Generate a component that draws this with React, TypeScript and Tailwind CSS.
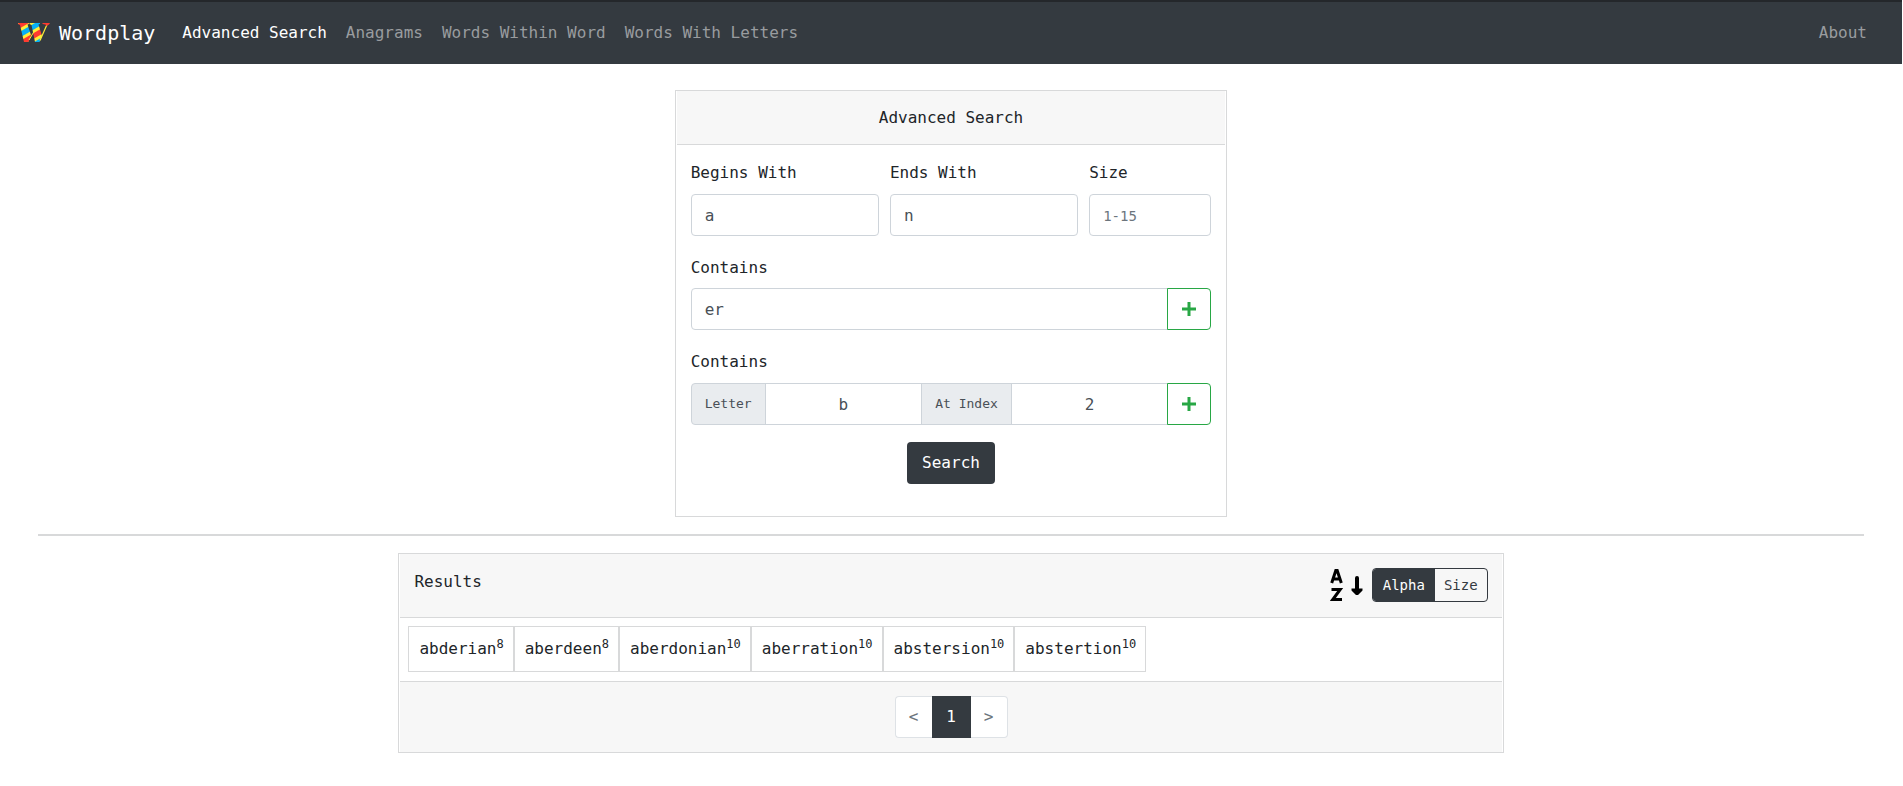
import React from "react";

const navLinks = ["Advanced Search", "Anagrams", "Words Within Word", "Words With Letters"];

const results = ["abderian", "aberdeen", "aberdonian", "aberration", "abstersion", "abstertion"];

const field =
  "h-[42px] w-full min-w-0 border border-[#ced4da] bg-white px-[13px] text-[#495057] outline-none";

function Logo() {
  return (
    <svg width="34" height="20" viewBox="0 0 34 20" aria-hidden="true">
      <defs>
        <pattern id="stripes" width="20" height="16" patternUnits="userSpaceOnUse" patternTransform="rotate(-30)">
          <rect width="20" height="16" fill="#ffee38" />
          <rect y="1" width="20" height="5" fill="#ff3b30" />
          <rect y="9" width="20" height="5" fill="#06b0f5" />
        </pattern>
      </defs>
      <path fill="url(#stripes)" d="M1 0H12V1L10.500 1.500L14 12L11.500 19H7L3 2L1 1Z" />
      <path fill="url(#stripes)" d="M12.500 0H23V1L21.500 1.500L25 13L22.500 19H18L14.500 2L12.500 1Z" />
      <path d="M12 17L17 8.500" fill="none" stroke="#ffee38" strokeWidth="1" />
      <path d="M23 17.500L30 1.500" fill="none" stroke="#ffee38" strokeWidth="1.200" />
      <path d="M25.500 0H33L32 1.500L29.500 3L28.500 1.500L25.500 1Z" fill="#ff3b30" />
    </svg>
  );
}

function SortIcon() {
  return (
    <svg width="34" height="34" viewBox="0 0 34 34" fill="none" stroke="#000" strokeWidth="3" aria-hidden="true">
      <path d="M1.700 15L5.800 2.500H7.200L11.300 15M3.500 11H9.500" />
      <path d="M1.500 21.500H10.200L2.800 31.500H12" />
      <path
        d="M25 10a2 2 0 0 1 4 0V20.500H32.500V22.500L28 27H26L21.500 22.500V20.500H25Z"
        fill="#000"
        stroke="none"
      />
    </svg>
  );
}

function AddButton({ label }: { label: string }) {
  return (
    <button
      type="button"
      aria-label={label}
      className="-ml-px flex h-[42px] w-11 shrink-0 items-center justify-center rounded-r border border-[#28a745] bg-white text-[#28a745]"
    >
      <svg width="14" height="14" viewBox="0 0 14 14" stroke="currentColor" strokeWidth="3" aria-hidden="true">
        <path d="M7 0V14M0 7H14" />
      </svg>
    </button>
  );
}

export default function App() {
  return (
    <div className="bg-white pr-px font-['DejaVu_Sans_Mono',monospace] text-base leading-6 text-[#212529]">
      <nav className="flex h-16 items-center border-t-2 border-[#24272b] bg-[#343a40] pr-[35px] pl-[17px]">
        <a href="#" className="mr-[27px] flex items-center gap-2 text-xl text-white">
          <Logo />
          Wordplay
        </a>
        <ul className="flex gap-[19px]">
          {navLinks.map((link, i) => (
            <li key={link}>
              <a href="#" className={i === 0 ? "text-white" : "text-[#999c9f]"}>
                {link}
              </a>
            </li>
          ))}
        </ul>
        <a href="#" className="ml-auto text-[#999c9f]">
          About
        </a>
      </nav>

      <main className="flex flex-col items-center px-[30px] pt-[26px]">
        <section className="w-[30%] min-w-[480px] border border-[#d8d9da] px-px">
          <h1 className="border-b border-[#d8d9da] bg-[#f7f7f7] pt-[15px] pb-[14px] text-center">
            Advanced Search
          </h1>
          <form className="px-[14px] pt-4 pb-8" onSubmit={(e) => e.preventDefault()}>
            <div className="grid grid-cols-[188fr_188fr_122fr] gap-[11px]">
              <div>
                <label htmlFor="begins" className="mb-[9px] block">Begins With</label>
                <input id="begins" defaultValue="a" className={`${field} rounded`} />
              </div>
              <div>
                <label htmlFor="ends" className="mb-[9px] block">Ends With</label>
                <input id="ends" defaultValue="n" className={`${field} rounded`} />
              </div>
              <div>
                <label htmlFor="size" className="mb-[9px] block">Size</label>
                <input
                  id="size"
                  placeholder="1-15"
                  className={`${field} rounded placeholder:text-sm placeholder:text-[#6c757d]`}
                />
              </div>
            </div>

            <label htmlFor="contains" className="mt-5 mb-2 block">Contains</label>
            <div className="flex">
              <input id="contains" defaultValue="er" className={`${field} flex-1 rounded-l`} />
              <AddButton label="Add contained text" />
            </div>

            <p className="mt-5 mb-[9px]">Contains</p>
            <div className="flex">
              <label
                htmlFor="letter"
                className="flex shrink-0 items-center rounded-l border border-[#ced4da] bg-[#e9ecef] px-[13px] text-[13px] text-[#495057]"
              >
                Letter
              </label>
              <input id="letter" defaultValue="b" className={`${field} -ml-px flex-1 text-center`} />
              <label
                htmlFor="index"
                className="-ml-px flex shrink-0 items-center border border-[#ced4da] bg-[#e9ecef] px-[13px] text-[13px] text-[#495057]"
              >
                At Index
              </label>
              <input id="index" defaultValue="2" className={`${field} -ml-px flex-1 text-center`} />
              <AddButton label="Add letter at index" />
            </div>

            <div className="mt-[17px] flex justify-center">
              <button type="submit" className="h-[42px] rounded bg-[#343a40] px-[15px] text-white">
                Search
              </button>
            </div>
          </form>
        </section>

        <hr className="my-[17px] w-full max-w-[calc(100%-16px)] border-t-2 border-[#d8d9da]" />

        <section className="w-[60%] min-w-[480px] border border-[#d8d9da] px-px">
          <header className="flex items-start justify-between border-b border-[#d8d9da] bg-[#f7f7f7] px-[14px] pt-[14px] pb-[15px]">
            <h2 className="pt-0.5">Results</h2>
            <div className="flex items-center gap-2 text-sm">
              <SortIcon />
              <div className="flex h-[34px] overflow-hidden rounded border border-[#343a40]">
                <button type="button" className="bg-[#343a40] px-[10px] text-white">Alpha</button>
                <button type="button" className="px-[9px] text-[#343a40]">Size</button>
              </div>
            </div>
          </header>
          <ul className="flex flex-wrap px-2 pt-2 pb-[9px]">
            {results.map((word) => (
              <li key={word} className="flex h-[46px] items-center border border-[#d8d9da] pr-[9px] pl-[10px]">
                <span>
                  {word}
                  <sup className="text-xs leading-none">{word.length}</sup>
                </span>
              </li>
            ))}
          </ul>
          <footer className="flex justify-center border-t border-[#d8d9da] bg-[#f7f7f7] py-[14px]">
            <button type="button" className="h-[42px] w-[37px] rounded-l border border-r-0 border-[#dee2e6] bg-white text-[#6c757d]">
              &lt;
            </button>
            <button type="button" className="h-[42px] w-[39px] bg-[#343a40] text-white">1</button>
            <button type="button" className="h-[42px] w-[37px] rounded-r border border-l-0 border-[#dee2e6] bg-white text-[#6c757d]">
              &gt;
            </button>
          </footer>
        </section>
      </main>
    </div>
  );
}
